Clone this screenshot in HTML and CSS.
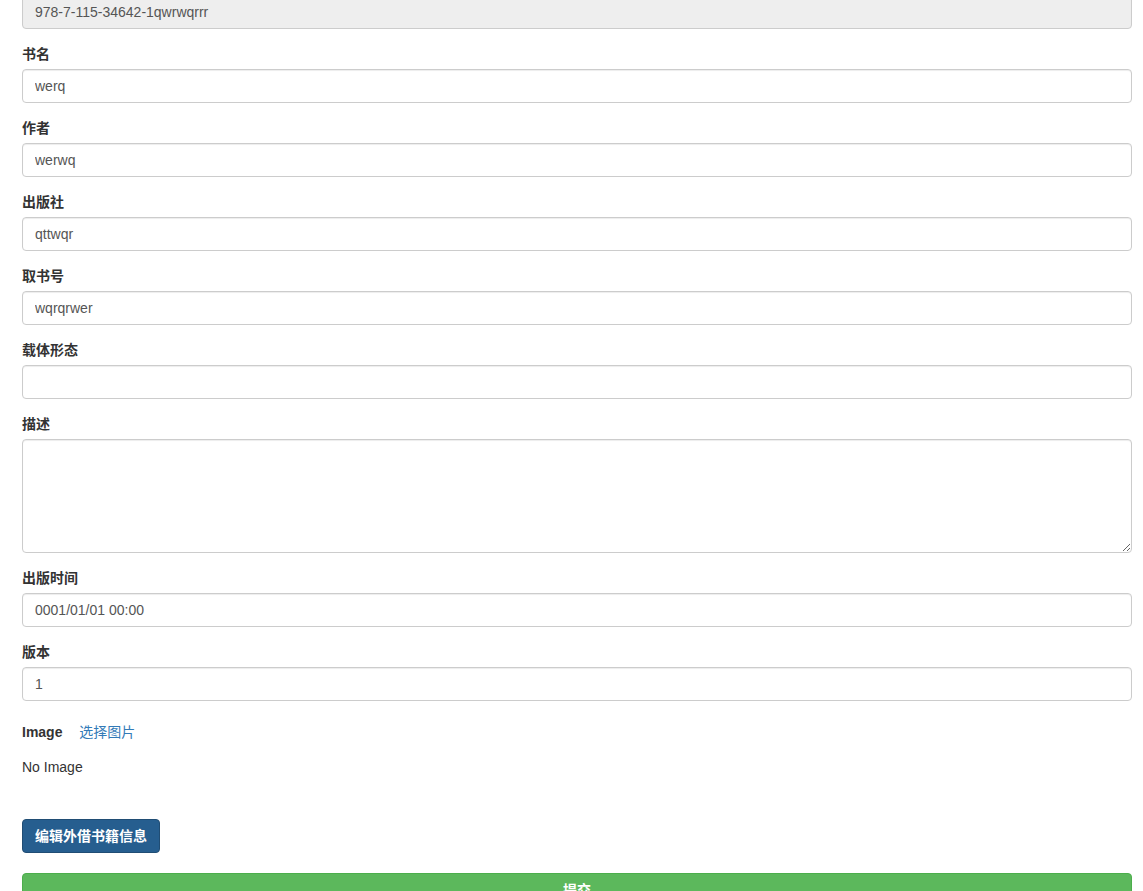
FILE: index.html
```html
<!DOCTYPE html>
<html lang="zh-CN">
<head>
    <meta charset="UTF-8">
    <meta name="viewport" content="width=device-width, initial-scale=1.0">
    <title>编辑外借书籍</title>
    <link rel="stylesheet" href="styles.css">
</head>
<body>
    <form class="book-form">
        <div class="form-group">
            <input class="form-control" type="text" value="978-7-115-34642-1qwrwqrrr" readonly>
        </div>

        <div class="form-group">
            <label for="title">书名</label>
            <input class="form-control" type="text" id="title" value="werq">
        </div>

        <div class="form-group">
            <label for="author">作者</label>
            <input class="form-control" type="text" id="author" value="werwq">
        </div>

        <div class="form-group">
            <label for="publisher">出版社</label>
            <input class="form-control" type="text" id="publisher" value="qttwqr">
        </div>

        <div class="form-group">
            <label for="callNo">取书号</label>
            <input class="form-control" type="text" id="callNo" value="wqrqrwer">
        </div>

        <div class="form-group">
            <label for="carrier">载体形态</label>
            <input class="form-control" type="text" id="carrier" value="">
        </div>

        <div class="form-group">
            <label for="desc">描述</label>
            <textarea class="form-control desc" id="desc" rows="5"></textarea>
        </div>

        <div class="form-group">
            <label for="pubDate">出版时间</label>
            <input class="form-control" type="text" id="pubDate" value="0001/01/01 00:00">
        </div>

        <div class="form-group">
            <label for="edition">版本</label>
            <input class="form-control" type="text" id="edition" value="1">
        </div>

        <div class="image-row">
            <label>Image</label>
            <a href="#" class="pick-image">选择图片</a>
        </div>
        <p class="no-image">No Image</p>

        <button type="button" class="btn btn-primary">编辑外借书籍信息</button>
        <button type="submit" class="btn btn-success btn-block">提交</button>
    </form>
</body>
</html>
```

FILE: styles.css
```css
body {
    margin: 0;
    font-family: "Liberation Sans", Arial, "Noto Sans CJK SC", sans-serif;
    font-size: 14px;
    line-height: 20px;
    color: #333;
    background: #fff;
}

.book-form {
    margin: -5px 11px 0 22px;
}

.form-group {
    margin-bottom: 15px;
}

label {
    display: inline-block;
    margin-bottom: 5px;
    font-weight: bold;
}

.form-control {
    display: block;
    box-sizing: border-box;
    width: 100%;
    height: 34px;
    padding: 6px 12px;
    font-family: inherit;
    font-size: 14px;
    line-height: 20px;
    color: #555;
    background-color: #fff;
    border: 1px solid #ccc;
    border-radius: 4px;
    box-shadow: inset 0 1px 1px rgba(0, 0, 0, 0.075);
    margin: 0;
}

.form-control[readonly] {
    background-color: #eee;
}

.desc {
    height: 114px;
    resize: vertical;
}

.image-row {
    margin-top: 21px;
}

.image-row label {
    margin-bottom: 0;
}

.pick-image {
    margin-left: 13px;
    color: #337ab7;
    text-decoration: none;
}

.no-image {
    margin: 15px 0 42px;
}

.btn {
    display: inline-block;
    box-sizing: border-box;
    padding: 6px 12px;
    font-family: inherit;
    font-size: 14px;
    font-weight: bold;
    line-height: 20px;
    color: #fff;
    border: 1px solid transparent;
    border-radius: 4px;
    cursor: pointer;
}

.btn-primary {
    background-color: #265e8f;
    border-color: #204d74;
}

.btn-success {
    background-color: #5cb85c;
    border-color: #4cae4c;
}

.btn-block {
    display: block;
    width: 100%;
    margin-top: 20px;
}
```
